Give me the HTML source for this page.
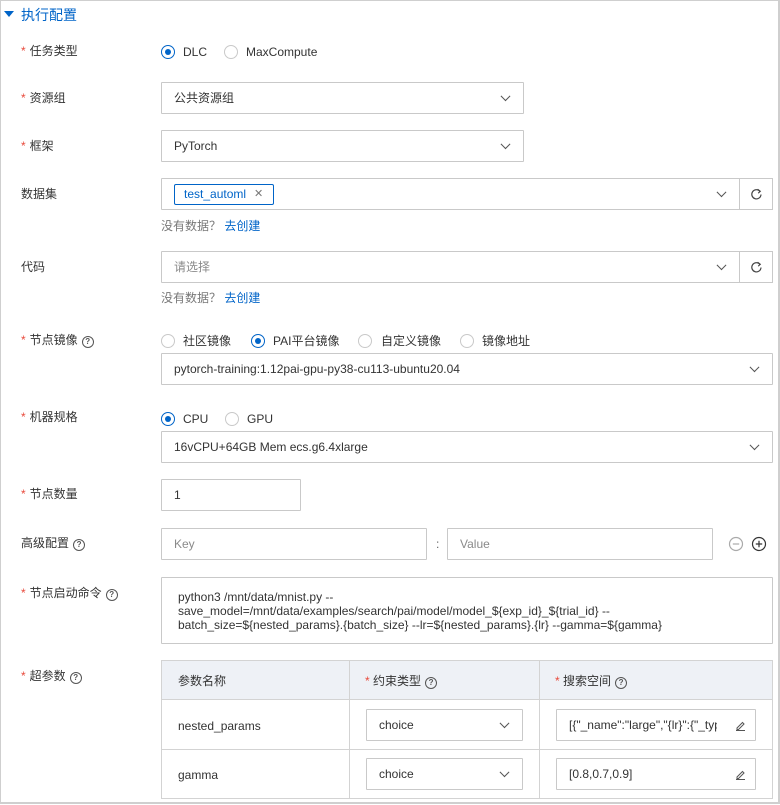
<!DOCTYPE html>
<html><head><meta charset="utf-8">
<style>
*{box-sizing:border-box;margin:0;padding:0}
body{width:780px;height:805px;background:#fff;font-family:"Liberation Sans","Noto Sans CJK SC",sans-serif;font-size:12px;line-height:14px;color:#333;position:relative;overflow:hidden}
.a{position:absolute;white-space:nowrap;line-height:14px}
.frame{position:absolute;left:0;top:0;width:780px;height:804px;border:1px solid #cfcfcf;border-right-width:2px;border-bottom-width:2px}
.lbl{position:absolute;left:21px;font-size:12px;color:#333;line-height:14px}
.lbl .s{color:#e84a3c;margin-right:4px}
.box{position:absolute;border:1px solid #c9c9c9;background:#fff;border-radius:1px}
.tx{position:absolute;left:12px;top:50%;transform:translateY(-50%);white-space:nowrap;color:#333;line-height:14px}
.ph{color:#8a8a8a}
.chev{position:absolute;right:14px;top:50%;width:7px;height:7px;border-right:1px solid #555;border-bottom:1px solid #555;transform:translateY(-75%) rotate(45deg)}
.radio{position:absolute;width:14px;height:14px;border:1px solid #c9c9c9;border-radius:50%;background:#fff}
.radio.on{border-color:#0064c8}
.radio.on::after{content:"";position:absolute;left:3px;top:3px;width:6px;height:6px;border-radius:50%;background:#0064c8}
.q{display:inline-block;width:12px;height:12px;border:1.2px solid #555;border-radius:50%;font-size:8px;line-height:10px;text-align:center;vertical-align:0px;margin-left:4px;font-weight:bold;color:#555}
.blue{color:#0064c8}
.rf{position:absolute;border:1px solid #c9c9c9;background:#fff}
.rf svg{position:absolute;left:10px;top:9px}
</style></head><body>
<div class="frame"></div>
<div class="a" style="left:4px;top:11px;width:0;height:0;border-left:5px solid transparent;border-right:5px solid transparent;border-top:6px solid #0064c8"></div>
<div class="a blue" style="left:21px;top:6px;font-size:14px;line-height:18px">执行配置</div>

<div class="lbl" style="top:44px"><span class="s">*</span>任务类型</div>
<div class="radio on" style="left:161px;top:45px"></div><div class="a" style="left:183px;top:45px">DLC</div>
<div class="radio" style="left:224px;top:45px"></div><div class="a" style="left:246px;top:45px">MaxCompute</div>

<div class="lbl" style="top:91px"><span class="s">*</span>资源组</div>
<div class="box" style="left:161px;top:82px;width:363px;height:32px"><span class="tx">公共资源组</span><span class="chev"></span></div>

<div class="lbl" style="top:139px"><span class="s">*</span>框架</div>
<div class="box" style="left:161px;top:130px;width:363px;height:32px"><span class="tx">PyTorch</span><span class="chev"></span></div>

<div class="lbl" style="top:187px">数据集</div>
<div class="box" style="left:161px;top:178px;width:579px;height:32px"><span class="chev"></span></div>
<div class="a" style="left:174px;top:184px;width:100px;height:21px;border:1px solid #0064c8;border-radius:2px;color:#0064c8;line-height:19px;padding-left:9px">test_automl<span style="position:absolute;left:79px;color:#777;font-size:11px">✕</span></div>
<div class="rf" style="left:739px;top:178px;width:34px;height:32px"><svg width="13" height="13" viewBox="0 0 13 13"><path d="M9.8 3.2A4.6 4.6 0 1 0 11 6.5" fill="none" stroke="#444" stroke-width="1.2"/><path d="M7.6 1.2L10.3 3.3 8.2 5.2" fill="none" stroke="#444" stroke-width="1.1"/></svg></div>
<div class="a" style="left:161px;top:219px;color:#777">没有数据？ <span class="blue">去创建</span></div>

<div class="lbl" style="top:260px">代码</div>
<div class="box" style="left:161px;top:251px;width:579px;height:32px"><span class="tx ph">请选择</span><span class="chev"></span></div>
<div class="rf" style="left:739px;top:251px;width:34px;height:32px"><svg width="13" height="13" viewBox="0 0 13 13"><path d="M9.8 3.2A4.6 4.6 0 1 0 11 6.5" fill="none" stroke="#444" stroke-width="1.2"/><path d="M7.6 1.2L10.3 3.3 8.2 5.2" fill="none" stroke="#444" stroke-width="1.1"/></svg></div>
<div class="a" style="left:161px;top:291px;color:#777">没有数据？ <span class="blue">去创建</span></div>

<div class="lbl" style="top:333px"><span class="s">*</span>节点镜像<span class="q">?</span></div>
<div class="radio" style="left:161px;top:334px"></div><div class="a" style="left:183px;top:334px">社区镜像</div>
<div class="radio on" style="left:251px;top:334px"></div><div class="a" style="left:273px;top:334px">PAI平台镜像</div>
<div class="radio" style="left:358px;top:334px"></div><div class="a" style="left:381px;top:334px">自定义镜像</div>
<div class="radio" style="left:460px;top:334px"></div><div class="a" style="left:482px;top:334px">镜像地址</div>
<div class="box" style="left:161px;top:353px;width:612px;height:32px"><span class="tx">pytorch-training:1.12pai-gpu-py38-cu113-ubuntu20.04</span><span class="chev"></span></div>

<div class="lbl" style="top:410px"><span class="s">*</span>机器规格</div>
<div class="radio on" style="left:161px;top:412px"></div><div class="a" style="left:183px;top:412px">CPU</div>
<div class="radio" style="left:225px;top:412px"></div><div class="a" style="left:247px;top:412px">GPU</div>
<div class="box" style="left:161px;top:431px;width:612px;height:32px"><span class="tx">16vCPU+64GB Mem ecs.g6.4xlarge</span><span class="chev"></span></div>

<div class="lbl" style="top:487px"><span class="s">*</span>节点数量</div>
<div class="box" style="left:161px;top:479px;width:140px;height:32px"><span class="tx">1</span></div>

<div class="lbl" style="top:536px">高级配置<span class="q">?</span></div>
<div class="box" style="left:161px;top:528px;width:266px;height:32px"><span class="tx ph">Key</span></div>
<div class="a" style="left:436px;top:537px;color:#666">:</div>
<div class="box" style="left:447px;top:528px;width:266px;height:32px"><span class="tx ph">Value</span></div>
<svg class="a" style="left:728px;top:536px" width="16" height="16" viewBox="0 0 16 16"><circle cx="8" cy="8" r="6.5" fill="none" stroke="#aaa" stroke-width="1.2"/><path d="M4.8 8h6.4" stroke="#aaa" stroke-width="1.2"/></svg>
<svg class="a" style="left:751px;top:536px" width="16" height="16" viewBox="0 0 16 16"><circle cx="8" cy="8" r="6.5" fill="none" stroke="#333" stroke-width="1.2"/><path d="M4.8 8h6.4M8 4.8v6.4" stroke="#333" stroke-width="1.2"/></svg>

<div class="lbl" style="top:586px"><span class="s">*</span>节点启动命令<span class="q">?</span></div>
<div class="box" style="left:161px;top:577px;width:612px;height:67px"></div>
<div class="a" style="left:178px;top:590px;line-height:14px">python3 /mnt/data/mnist.py --<br>save_model=/mnt/data/examples/search/pai/model/model_${exp_id}_${trial_id} --<br>batch_size=${nested_params}.{batch_size} --lr=${nested_params}.{lr} --gamma=${gamma}</div>

<div class="lbl" style="top:669px"><span class="s">*</span>超参数<span class="q">?</span></div>
<div class="a" style="left:161px;top:660px;width:612px;height:139px;border:1px solid #d3d3d3"></div>
<div class="a" style="left:162px;top:661px;width:610px;height:39px;background:#eef1f6;border-bottom:1px solid #d3d3d3"></div>
<div class="a" style="left:161px;top:749px;width:612px;height:1px;background:#d3d3d3"></div>
<div class="a" style="left:349px;top:660px;width:1px;height:139px;background:#d3d3d3"></div>
<div class="a" style="left:539px;top:660px;width:1px;height:139px;background:#d3d3d3"></div>
<div class="a" style="left:178px;top:674px">参数名称</div>
<div class="a" style="left:365px;top:674px"><span style="color:#e84a3c">*</span> 约束类型<span class="q">?</span></div>
<div class="a" style="left:555px;top:674px"><span style="color:#e84a3c">*</span> 搜索空间<span class="q">?</span></div>
<div class="a" style="left:178px;top:719px">nested_params</div>
<div class="a" style="left:178px;top:768px">gamma</div>
<div class="box" style="left:366px;top:709px;width:157px;height:32px"><span class="tx">choice</span><span class="chev"></span></div>
<div class="box" style="left:366px;top:758px;width:157px;height:32px"><span class="tx">choice</span><span class="chev"></span></div>
<div class="box" style="left:556px;top:709px;width:200px;height:32px;overflow:hidden"><span class="tx" style="width:148px;overflow:hidden">[{"_name":"large","{lr}":{"_type":"choice"}}]</span><svg class="a" style="right:9px;top:10px" width="11" height="11" viewBox="0 0 11 11"><path d="M2 8L7.5 2.5 9 4 3.5 9.5H2zM1 10.5h9" fill="none" stroke="#555" stroke-width="1"/></svg></div>
<div class="box" style="left:556px;top:758px;width:200px;height:32px"><span class="tx">[0.8,0.7,0.9]</span><svg class="a" style="right:9px;top:10px" width="11" height="11" viewBox="0 0 11 11"><path d="M2 8L7.5 2.5 9 4 3.5 9.5H2zM1 10.5h9" fill="none" stroke="#555" stroke-width="1"/></svg></div>
</body></html>
